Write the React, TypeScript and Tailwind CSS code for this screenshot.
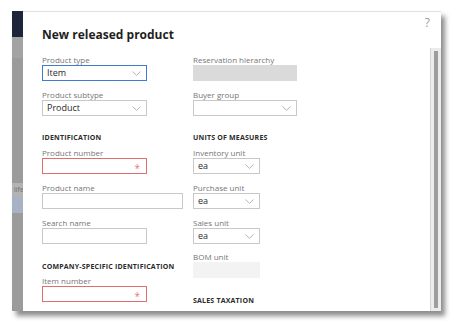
type FieldProps = {
  label: string;
  value?: string;
  width: string;
  variant?: "normal" | "focused" | "required" | "disabled" | "readonly";
  select?: boolean;
  className?: string;
};

function Chevron() {
  return (
    <svg width="9" height="5" viewBox="0 0 9 5" fill="none" className="mr-[1px]">
      <polyline points="0.5,0.5 4.5,4.3 8.5,0.5" stroke="#a2a2a2" strokeWidth="0.8" />
    </svg>
  );
}

function Field({ label, value, width, variant = "normal", select, className = "" }: FieldProps) {
  const boxClass =
    variant === "focused"
      ? "border border-[#3f7bd0] bg-white"
      : variant === "required"
      ? "border border-[#e06c6c] bg-white"
      : variant === "disabled"
      ? "bg-[#dadada]"
      : variant === "readonly"
      ? "bg-[#f3f3f3]"
      : "border border-[#c8c8c8] bg-white";

  return (
    <div className={`flex flex-col ${className}`}>
      <div className="h-[10px] text-[8px] leading-[10px] text-[#767676]">{label}</div>
      <div className={`h-[16px] flex items-center justify-between pl-[4px] pr-[4px] ${width} ${boxClass}`}>
        <span className="text-[9px] leading-[14px] text-[#2b2b2b]">{value}</span>
        {select && <Chevron />}
        {variant === "required" && <span className="text-[10px] leading-[10px] text-[#ea7a7a] mr-[2px] mt-[3px]">*</span>}
      </div>
    </div>
  );
}

function SectionHeader({ children, className = "" }: { children: string; className?: string }) {
  return (
    <div className={`h-[10px] text-[7px] leading-[10px] font-bold tracking-[0.2px] text-[#2b2b2b] ${className}`}>
      {children}
    </div>
  );
}

export default function App() {
  return (
    <div className="w-[464px] h-[328px] bg-white pt-[11px] pl-[12px] font-['Open_Sans',sans-serif]">
      <div className="flex w-[429px] h-[300px] shadow-[4px_5px_5px_rgba(0,0,0,0.45)]">
        {/* dimmed app behind the dialog */}
        <div className="w-[11px] flex flex-col bg-[#9b9b9b] overflow-hidden">
          <div className="h-[26px] bg-[#1c2638]" />
          <div className="h-[21px] bg-[#a3a3a3]" />
          <div className="h-[125px]" />
          <div className="h-[14px] bg-[#b3b3b3] text-[7px] leading-[14px] text-[#6e6e6e] pl-[2px]">life</div>
          <div className="h-[16px] bg-[#a7b3c4]" />
        </div>

        {/* dialog */}
        <div className="relative flex-1 flex bg-white border-t border-[#e2e2e2]">
          <div className="flex-1 pl-[19px] pt-[15px]">
            <h1 className="text-[12px] leading-[16px] font-bold text-[#1f1f1f]">New released product</h1>

            <div className="flex gap-[10px] mt-[12px]">
              <div className="w-[141px] flex flex-col">
                <Field label="Product type" value="Item" width="w-[105px]" variant="focused" select />
                <Field label="Product subtype" value="Product" width="w-[105px]" select className="mt-[9px]" />
                <SectionHeader className="mt-[17px]">IDENTIFICATION</SectionHeader>
                <Field label="Product number" width="w-[105px]" variant="required" className="mt-[5px]" />
                <Field label="Product name" width="w-[141px]" className="mt-[9px]" />
                <Field label="Search name" width="w-[105px]" className="mt-[9px]" />
                <SectionHeader className="mt-[18px]">COMPANY-SPECIFIC IDENTIFICATION</SectionHeader>
                <Field label="Item number" width="w-[105px]" variant="required" className="mt-[4px]" />
              </div>

              <div className="w-[104px] flex flex-col">
                <Field label="Reservation hierarchy" width="w-[104px]" variant="disabled" />
                <Field label="Buyer group" width="w-[104px]" select className="mt-[9px]" />
                <SectionHeader className="mt-[17px]">UNITS OF MEASURES</SectionHeader>
                <Field label="Inventory unit" value="ea" width="w-[67px]" select className="mt-[5px]" />
                <Field label="Purchase unit" value="ea" width="w-[67px]" select className="mt-[9px]" />
                <Field label="Sales unit" value="ea" width="w-[67px]" select className="mt-[9px]" />
                <Field label="BOM unit" width="w-[67px]" variant="readonly" className="mt-[8px]" />
                <SectionHeader className="mt-[18px]">SALES TAXATION</SectionHeader>
              </div>
            </div>
          </div>

          <span className="absolute right-[11px] top-[4px] text-[12px] leading-[14px] text-[#9a9a9a]">?</span>

          {/* scrollbar */}
          <div className="w-[11px] pt-[36px] flex flex-col">
            <div className="flex-1 bg-[#ececec] border-l border-[#d4d4d4] pt-[3px] pb-[3px] pl-[3px]">
              <div className="w-[4px] h-full bg-[#9d9d9d]" />
            </div>
          </div>
        </div>
      </div>
    </div>
  );
}
